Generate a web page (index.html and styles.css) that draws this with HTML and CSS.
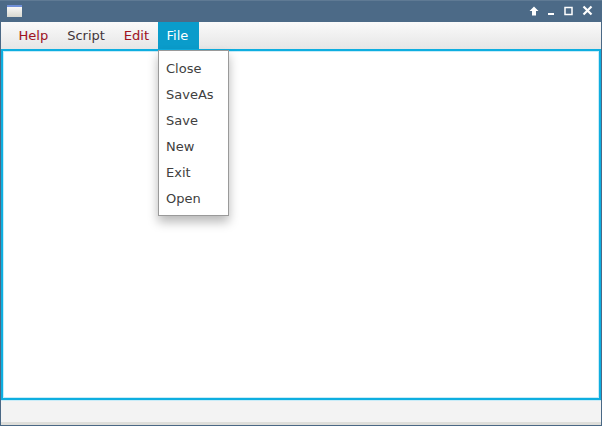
FILE: index.html
```html
<!DOCTYPE html>
<html lang="en">
<head>
<meta charset="utf-8">
<title>Window</title>
<link rel="stylesheet" href="styles.css">
</head>
<body>
<div class="window">
  <header class="titlebar">
    <svg class="app-icon" width="15" height="12" viewBox="0 0 15 12"><defs><linearGradient id="g" x1="0" y1="0" x2="0" y2="1"><stop offset="0" stop-color="#ffffff"/><stop offset="1" stop-color="#d8d8d0"/></linearGradient></defs><rect width="15" height="12" fill="url(#g)"/><rect width="15" height="2" fill="#6f8fd8"/></svg>
    <div class="controls">
      <svg class="tight" width="10" height="10" viewBox="0 0 10 10"><path d="M5 0.5L9.5 5H7V9.5H3V5H0.5Z" fill="#fff"/></svg>
      <svg class="tight" width="9" height="10" viewBox="0 0 9 10"><rect x="1" y="7" width="6" height="2" fill="#fff"/></svg>
      <svg width="9" height="10" viewBox="0 0 9 10"><rect x="1" y="1.5" width="7" height="7" fill="none" stroke="#fff" stroke-width="1.5"/></svg>
      <svg width="11" height="11" viewBox="0 0 11 11"><path d="M1.5 1.5L9.5 9.5M9.5 1.5L1.5 9.5" stroke="#fff" stroke-width="2.2"/></svg>
    </div>
  </header>
  <nav class="menubar">
    <span class="menu red">Help</span>
    <span class="menu dark">Script</span>
    <span class="menu red">Edit</span>
    <span class="menu active">File</span>
    <ul class="popup">
      <li>Close</li>
      <li>SaveAs</li>
      <li>Save</li>
      <li>New</li>
      <li>Exit</li>
      <li>Open</li>
    </ul>
  </nav>
  <main class="editor"></main>
  <footer class="statusbar"></footer>
</div>
</body>
</html>
```
FILE: styles.css
```css
* { box-sizing: border-box; }
html, body { margin: 0; padding: 0; }
body { width: 602px; height: 426px; overflow: hidden; background: #4a6885; font-family: "DejaVu Sans", sans-serif; font-size: 13px; }
.window { width: 602px; height: 426px; display: flex; flex-direction: column; padding: 0 1px 1px; background: #4a6885; }
.titlebar { height: 22px; flex: none; display: flex; align-items: center; justify-content: space-between; padding: 0 9px 2px 6px; background: #4c6a87; margin: 0 -1px; border-top: 1px solid #5f7a94; }
.app-icon { display: block; margin-left: 1px; }
.controls { display: flex; align-items: center; gap: 9px; }
.controls svg { display: block; }
.controls .tight { margin-right: -1px; }
.menubar { position: relative; height: 27px; flex: none; display: flex; padding-left: 8px; background: linear-gradient(#fafafa, #e6e6e6); }
.menu { height: 27px; line-height: 27px; padding: 0 9.5px; }
.red { color: #a2141c; text-shadow: 0.4px 0 rgba(40,110,220,.18); }
.dark { color: #42353a; }
.active { background: #0a9ccb; color: #fff; padding: 0 11px 0 9px; margin-left: -1px; }
.popup { position: absolute; z-index: 2; left: 157px; top: 28px; width: 71px; height: 166px; margin: 0; padding: 5px 0 0; list-style: none; background: #fff; border: 1px solid #9a9a9a; box-shadow: 0 6px 10px rgba(0,0,0,.28); color: #404040; }
.popup li { height: 26px; line-height: 25px; padding-left: 7px; }
.editor { height: 351px; flex: none; background: #fff; border: 2px solid #0eaee0; box-shadow: inset 0 0 0 1px #c8ecf8; }
.statusbar { flex: 1; background: #f3f3f3; border-bottom: 3px solid #dededa; border-top: 1px solid #c8ecf8; }
```
